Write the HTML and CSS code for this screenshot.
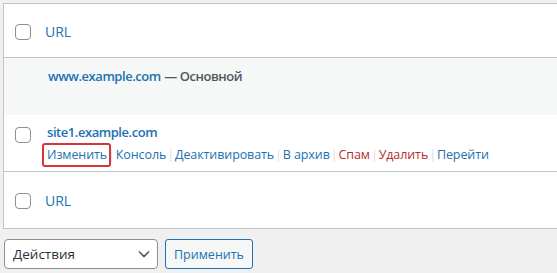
FILE: index.html
```html
<!DOCTYPE html>
<html lang="ru">
<head>
  <meta charset="UTF-8">
  <title>Сайты</title>
  <link rel="stylesheet" href="styles.css">
</head>
<body>

  <!-- Sites list table -->
  <div class="list-table">
    <div class="row head-row">
      <span class="check"></span>
      <a href="#" class="col-title">URL</a>
    </div>

    <div class="row main-row">
      <div class="cell">
        <a href="#" class="site-name">www.example.com</a>
        <span class="site-state">— Основной</span>
      </div>
    </div>

    <div class="row site-row">
      <span class="check"></span>
      <div class="cell">
        <a href="#" class="site-name">site1.example.com</a>
        <div class="row-actions">
          <a href="#" class="marked">Изменить</a><span class="sep">|</span>
          <a href="#">Консоль</a><span class="sep">|</span>
          <a href="#">Деактивировать</a><span class="sep">|</span>
          <a href="#">В архив</a><span class="sep">|</span>
          <a href="#" class="danger">Спам</a><span class="sep">|</span>
          <a href="#" class="danger">Удалить</a><span class="sep">|</span>
          <a href="#">Перейти</a>
        </div>
      </div>
    </div>

    <div class="row foot-row">
      <span class="check"></span>
      <a href="#" class="col-title">URL</a>
    </div>
  </div>

  <!-- Bulk actions -->
  <div class="tablenav">
    <div class="select">
      <span>Действия</span>
      <svg class="chevron" width="14" height="14" viewBox="0 0 14 14"><path d="M2 4.5l5 5 5-5" fill="none" stroke="#50575e" stroke-width="1.6"/></svg>
    </div>
    <button class="button">Применить</button>
  </div>

</body>
</html>
```

FILE: styles.css
```css
* {
  margin: 0;
  padding: 0;
  box-sizing: border-box;
}

body {
  margin: 3px 0 0 3px;
  background-color: #f0f0f1;
  font-family: "Open Sans", "Noto Sans", sans-serif;
  font-size: 13px;
  color: #3c434a;
  overflow: hidden;
}

a {
  color: #2271b1;
  text-decoration: none;
}

.list-table {
  width: 620px;
  background-color: #fff;
  border: 1px solid #c3c4c7;
}

.row {
  display: flex;
  align-items: center;
}

.check {
  flex: none;
  width: 16px;
  height: 16px;
  margin: 0 14px 0 11px;
  border: 1px solid #8c8f94;
  border-radius: 4px;
  background-color: #fff;
}

.col-title {
  font-size: 14px;
  line-height: 20px;
}

.head-row {
  height: 54px;
  padding-top: 2px;
  border-bottom: 1px solid #c3c4c7;
}

.main-row {
  height: 57px;
  align-items: flex-start;
  padding: 8px 0 0 44px;
  background-color: #f6f7f7;
}

.site-name,
.site-state {
  font-weight: 600;
  line-height: 20px;
  letter-spacing: -0.45px;
}

.site-state {
  color: #50575e;
}

.site-row {
  height: 57px;
  align-items: flex-start;
  padding-top: 12px;
  border-bottom: 1px solid #c3c4c7;
}

.site-row .cell {
  margin-left: 2px;
  margin-top: -5px;
}

.row-actions {
  display: flex;
  align-items: center;
  margin-top: 3px;
  line-height: 20px;
  font-size: 12.5px;
  letter-spacing: -0.1px;
}

.row-actions .sep {
  color: #dcdcde;
  margin: 0 1px;
}

.row-actions .danger {
  color: #b32d2e;
}

.row-actions .marked {
  position: relative;
}

.row-actions .marked::after {
  content: "";
  position: absolute;
  left: -5px;
  right: -4px;
  top: -2px;
  bottom: -2px;
  border: 2px solid #d63638;
  border-radius: 3px;
}

.foot-row {
  height: 56px;
  padding-top: 2px;
}

.tablenav {
  display: flex;
  gap: 7px;
  margin: 10px 0 0 1px;
}

.select {
  width: 154px;
  height: 30px;
  display: flex;
  align-items: center;
  justify-content: space-between;
  padding: 0 6px 0 8px;
  background-color: #fff;
  border: 1px solid #8c8f94;
  border-radius: 4px;
  font-size: 13.5px;
  color: #2c3338;
}

.button {
  height: 30px;
  padding: 0 8px;
  font-family: inherit;
  font-size: 12.5px;
  color: #2271b1;
  background-color: #f6f7f7;
  border: 1px solid #2271b1;
  border-radius: 3px;
}
```
